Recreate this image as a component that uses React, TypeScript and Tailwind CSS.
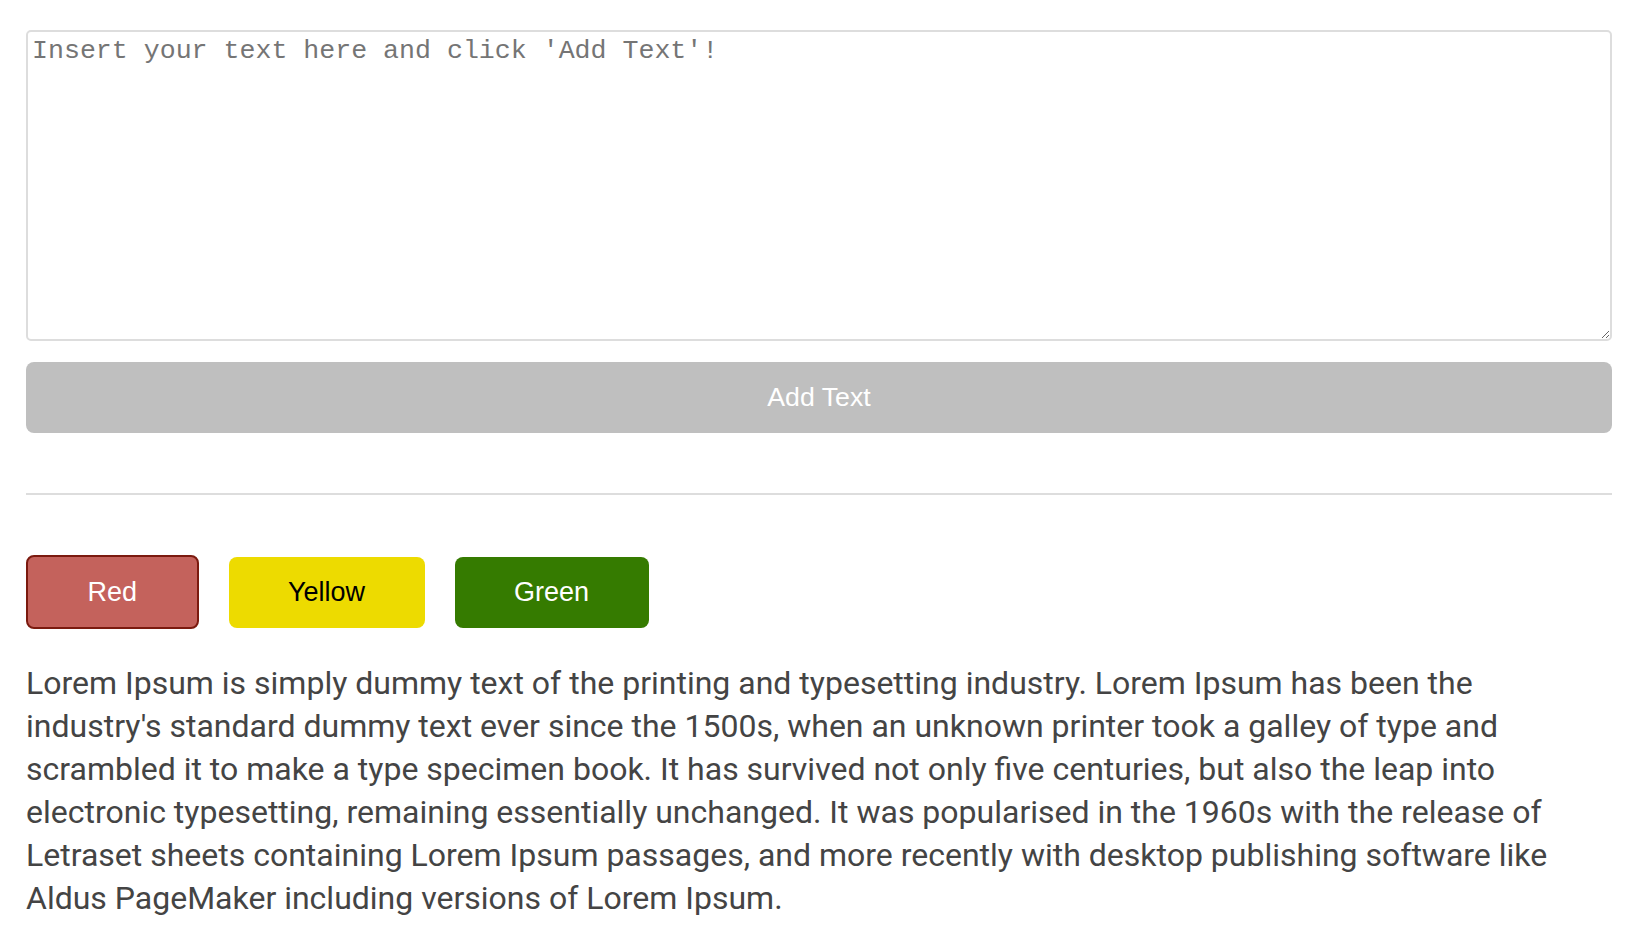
import React from "react";

export default function App() {
  return (
    <div className="min-h-screen bg-white pl-[26px] pr-[36px] pt-[30px]">
      <textarea
        className="block w-full h-[311px] border-2 border-[#dddddd] rounded-[5px] pt-0 pl-[4px] pr-[2px] pb-[2px] text-[26.6px] leading-[38px] text-[#333] placeholder:text-[#757575] outline-none"
        style={{ fontFamily: '"Liberation Mono", monospace' }}
        placeholder="Insert your text here and click 'Add Text'!"
      />
      <button
        className="mt-[21px] block w-full h-[71px] bg-[#bfbfbf] rounded-[8px] text-white text-[26.7px]"
        style={{ fontFamily: '"Liberation Sans", Arial, sans-serif' }}
      >
        Add Text
      </button>
      <div className="mt-[60px] h-[2px] bg-[#dddddd]" />
      <div
        className="mt-[60px] flex items-center gap-[30px] text-[27px]"
        style={{ fontFamily: '"Liberation Sans", Arial, sans-serif' }}
      >
        <button className="h-[74px] px-[59.5px] bg-[#c4625c] border-2 border-[#7b1a0f] rounded-[8px] text-white">
          Red
        </button>
        <button className="h-[71px] px-[59.5px] bg-[#eddb00] rounded-[8px] text-black">
          Yellow
        </button>
        <button className="h-[71px] px-[59.5px] bg-[#357b00] rounded-[8px] text-white">
          Green
        </button>
      </div>
      <p
        className="mt-[33px] text-[32px] leading-[42.9px] text-[#444444]"
        style={{ fontFamily: 'Roboto, sans-serif' }}
      >
        Lorem Ipsum is simply dummy text of the printing and typesetting industry. Lorem Ipsum has been the industry's standard dummy text ever since the 1500s, when an unknown printer took a galley of type and scrambled it to make a type specimen book. It has survived not only five centuries, but also the leap into electronic typesetting, remaining essentially unchanged. It was popularised in the 1960s with the release of Letraset sheets containing Lorem Ipsum passages, and more recently with desktop publishing software like Aldus PageMaker including versions of Lorem Ipsum.
      </p>
    </div>
  );
}
